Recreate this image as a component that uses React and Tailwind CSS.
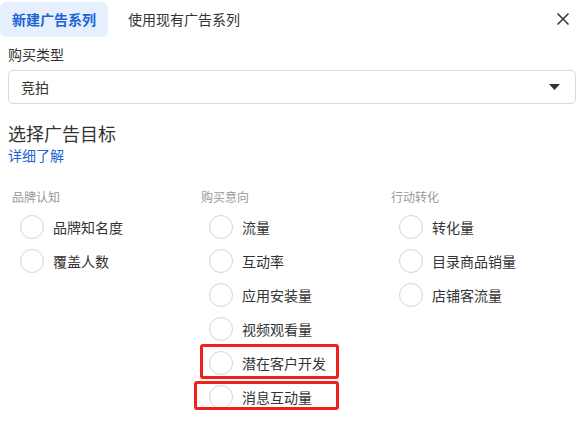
import React from "react";

const font = { fontFamily: '"Noto Sans CJK SC", "Noto Sans", sans-serif' };

function Radio({ label }) {
  return (
    <div className="flex h-[34px] items-center">
      <span className="ml-2 box-border h-6 w-6 shrink-0 rounded-full border border-[#d4d4d4] bg-white" />
      <span className="ml-[9px] text-[14px] leading-5 text-[#333]">{label}</span>
    </div>
  );
}

function Column({ title, items, marks = {} }) {
  return (
    <div className="flex flex-col">
      <div className="h-4 text-[12px] leading-4 text-[#999]">{title}</div>
      <div className="mt-[5px] flex flex-col">
        {items.map((it) => (
          <div key={it} className="relative">
            <Radio label={it} />
            {marks[it] === 1 && (
              <div className="absolute left-[-1px] top-[-2px] h-[35px] w-[139px] rounded-[3px] border-[3px] border-[#f0201a]" />
            )}
            {marks[it] === 2 && (
              <div className="absolute left-[-7px] top-[1px] h-[29px] w-[145px] rounded-[3px] border-[3px] border-[#f0201a]" />
            )}
          </div>
        ))}
      </div>
    </div>
  );
}

export default function App() {
  return (
    <div className="h-[430px] w-[584px] overflow-hidden bg-white" style={font}>
      <div className="flex items-start pt-[2px]">
        <div className="flex h-[35px] items-center rounded-[6px] bg-[#e6effd] px-3 text-[14px] font-semibold text-[#1d63d8]">
          新建广告系列
        </div>
        <div className="ml-2 flex h-[35px] items-center px-3 text-[14px] text-[#333]">使用现有广告系列</div>
        <div className="ml-auto mr-[15px] mt-[11px]">
          <svg width="12" height="12" viewBox="0 0 12 12">
            <path d="M0.5 0.5 L11.5 11.5 M11.5 0.5 L0.5 11.5" stroke="#333" strokeWidth="1.5" fill="none" />
          </svg>
        </div>
      </div>
      <div className="px-2">
        <div className="mt-[7px] text-[14px] leading-5 text-[#333]">购买类型</div>
        <div className="mt-[6px] box-border flex h-[34px] items-center rounded-[5px] border border-[#d9d9d9] pl-[12px] pr-[15px]">
          <span className="text-[14px] text-[#333]">竞拍</span>
          <svg className="ml-auto" width="11" height="6" viewBox="0 0 11 6">
            <path d="M0 0 L11 0 L5.5 6 Z" fill="#333" />
          </svg>
        </div>
        <div className="mt-[17px] text-[18px] leading-6 text-[#333]">选择广告目标</div>
        <div className="text-[14px] leading-5 text-[#1d63d8]">详细了解</div>
        <div className="mt-6 grid grid-cols-[189px_190px_1fr] pl-1">
          <Column title="品牌认知" items={["品牌知名度", "覆盖人数"]} />
          <Column
            title="购买意向"
            items={["流量", "互动率", "应用安装量", "视频观看量", "潜在客户开发", "消息互动量"]}
            marks={{ 潜在客户开发: 1, 消息互动量: 2 }}
          />
          <Column title="行动转化" items={["转化量", "目录商品销量", "店铺客流量"]} />
        </div>
      </div>
    </div>
  );
}
